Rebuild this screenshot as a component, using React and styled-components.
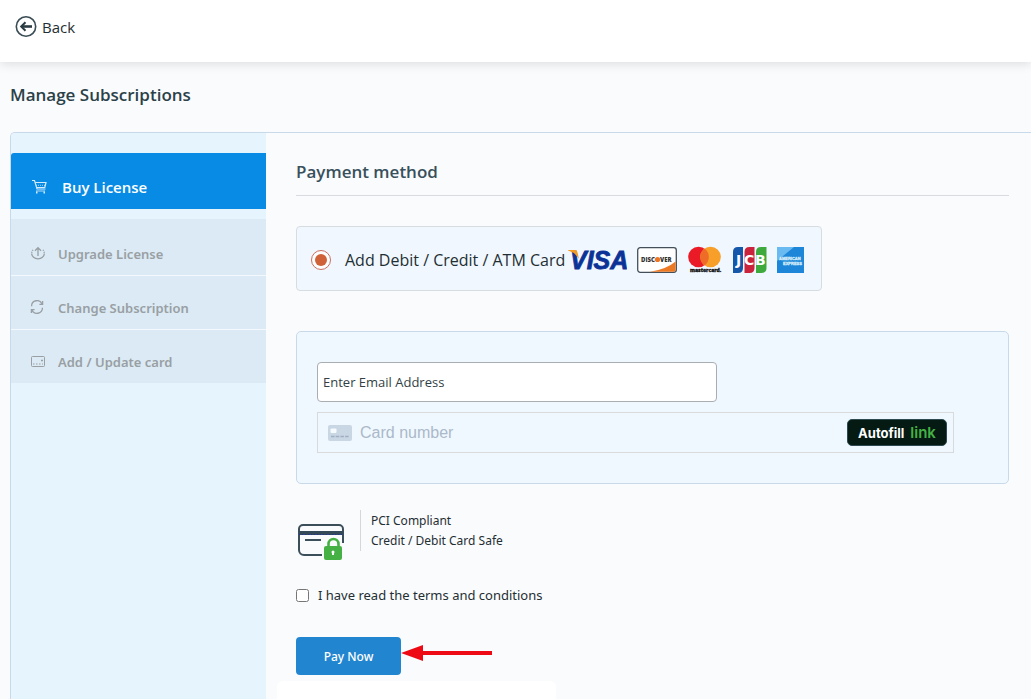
import React, { useState } from "react";
import styled, { createGlobalStyle } from "styled-components";

const colors = {
  page: "#fafbfd",
  text: "#1f2f33",
  heading: "#2b4148",
  border: "#c8d9e9",
  sidebar: "#e6f4fd",
  item: "#dbeaf5",
  active: "#078be4",
  muted: "#999fa3",
  button: "#2185d0",
  green: "#45b144"
};

const headingFont = `"Open Sans", "Noto Sans", sans-serif`;
const bodyFont = `"Noto Sans", "Open Sans", sans-serif`;

const GlobalStyle = createGlobalStyle`
  * {
    box-sizing: border-box;
  }

  body {
    margin: 0;
    background: ${colors.page};
    color: ${colors.text};
    font-family: ${bodyFont};
    font-size: 14px;
  }

  button,
  input {
    font-family: inherit;
  }
`;

/* icons */

const BackIcon = () => (
  <svg width="22" height="22" viewBox="0 0 22 22" fill="none" aria-hidden="true">
    <circle cx="11" cy="10.5" r="9.7" stroke="#3a4c54" strokeWidth="1.6" />
    <path d="M17 10.5H7" stroke="#2b3b42" strokeWidth="2.6" />
    <path d="M10.5 6.3L6.2 10.5l4.3 4.2" stroke="#2b3b42" strokeWidth="2" />
  </svg>
);

const CartIcon = () => (
  <svg width="16" height="16" viewBox="0 0 16 16" fill="none" stroke="#d3ebfb" strokeWidth="1.2" aria-hidden="true">
    <path d="M1 1.5h2.5L6 10h8.5" />
    <path d="M4 3.5H15L13.8 8.5H5.5" />
    <path d="M5 6.3h9" strokeDasharray="1 1" opacity="0.6" />
    <path d="M5 12h9" opacity="0.7" />
    <path d="M5 13.5h1.5M12.5 13.5H14" strokeWidth="2" />
  </svg>
);

const UploadIcon = () => (
  <svg width="16" height="16" viewBox="0 0 16 16" fill="none" stroke="currentColor" strokeWidth="1.3" aria-hidden="true">
    <path d="M8 10V2M5 4.7L8 1.7l3 3" />
    <path d="M3 3.8A6.3 6.3 0 0 0 1.7 7M13 3.8A6.3 6.3 0 0 1 14.3 7" strokeDasharray="1.2 1" />
    <path d="M1.7 7.5a6.3 5.4 0 0 0 12.600 0" />
  </svg>
);

const RefreshIcon = () => (
  <svg width="16" height="16" viewBox="0 0 16 16" fill="none" stroke="currentColor" strokeWidth="1.3" aria-hidden="true">
    <path d="M1.6 6.2A5.400 5.400 0 0 1 12 4M12.400 7.800A5.400 5.400 0 0 1 2 10" />
    <path d="M12.600 1v3.400H9.400M1.400 13V9.600h3.200" />
  </svg>
);

const SmallCardIcon = () => (
  <svg width="16" height="16" viewBox="0 0 16 16" fill="none" stroke="currentColor" aria-hidden="true">
    <rect x="1.500" y="2.500" width="13" height="10" rx="1" />
    <path d="M3 10h1.500M6 10h1.500M9 10h1.500M12 10h1M11 6.500h2M12 5.500v2" />
  </svg>
);

const CardNumberIcon = () => (
  <svg width="24" height="16" viewBox="0 0 24 16" aria-hidden="true">
    <rect width="24" height="16" rx="2" fill="#c9d6e3" />
    <rect x="2.500" y="3.500" width="6" height="4.500" rx="1" fill="#f5fbff" />
    <path d="M3 11.500h18" stroke="#9fb0c2" strokeWidth="1.600" strokeDasharray="3.500 1.200" />
  </svg>
);

const SecureCardIcon = () => (
  <svg width="48" height="38" viewBox="0 0 48 38" fill="none" aria-hidden="true">
    <path d="M25 33H7a5 5 0 0 1-5-5V7a4 4 0 0 1 4-4h36a4 4 0 0 1 4 4v14" stroke="#3b4f5b" strokeWidth="2" />
    <path d="M2 11h44" stroke="#354a58" strokeWidth="4" />
    <path d="M2 12.500h44" stroke="#2431a5" strokeDasharray="1 2" />
    <path d="M8 18h16" stroke="#3b4f5b" strokeWidth="2" />
    <path d="M31.500 26v-4a5 5 0 0 1 10 0v4" stroke={colors.green} strokeWidth="2.600" />
    <rect x="27" y="24" width="18" height="14" rx="2" fill={colors.green} />
    <path d="M36 29v4" stroke="#fff" strokeWidth="2" />
    <circle cx="36" cy="30" r="1.500" fill="#fff" />
  </svg>
);

const VisaLogo = () => (
  <svg width="60" height="26" viewBox="0 0 60 26" role="img" aria-label="Visa">
    <text
      x="3"
      y="22"
      fontFamily="Liberation Sans"
      fontSize="25"
      fontWeight="700"
      fontStyle="italic"
      fill="#0b3296"
      stroke="#0b3296"
      strokeWidth="0.8"
    >
      VISA
    </text>
    <path d="M1 3h7.500q1.600 0 2 2.400L12 12Q8 5.500 1 3.600z" fill="#f29b26" />
  </svg>
);

const DiscoverLogo = () => (
  <svg width="40" height="26" viewBox="0 0 40 26" role="img" aria-label="Discover">
    <rect x="0.700" y="0.700" width="38.600" height="24.600" rx="2.500" fill="#fff" stroke="#43505a" strokeWidth="1.300" />
    <path d="M13 24.700Q29 22.500 38.600 14.500V23q0 1.700-1.700 1.700z" fill="#ec7a25" />
    <g fontFamily="Open Sans" fontSize="6" fontWeight="800" fill="#333">
      <text x="4" y="15">DISC</text>
      <text x="23" y="15">VER</text>
    </g>
    <circle cx="20.500" cy="12.500" r="2.600" fill="#ee7623" />
  </svg>
);

const MastercardLogo = () => (
  <svg width="35" height="28" viewBox="0 0 35 28" role="img" aria-label="Mastercard">
    <circle cx="11.500" cy="11" r="10.300" fill="#ea1b26" />
    <circle cx="23.500" cy="11" r="10.300" fill="#f79f28" />
    <path d="M17.500 2.600a10.300 10.300 0 0 1 0 16.800a10.300 10.300 0 0 1 0-16.800z" fill="#ef6b28" />
    <text x="3" y="26" fontFamily="Open Sans" fontSize="5" fontWeight="800" fill="#111" stroke="#111" strokeWidth="0.300">
      mastercard.
    </text>
  </svg>
);

const JcbLogo = () => (
  <svg width="35" height="28" viewBox="0 0 35 28" role="img" aria-label="JCB">
    <path d="M1 6q0-5 5-5h5v21q0 5-5 5H1z" fill="#1557a8" />
    <path d="M12.500 6q0-5 5-5h5v21q0 5-5 5h-5z" fill="#c9243c" />
    <path d="M24 6q0-5 5-5h5.500v21q0 5-5 5H24z" fill="#3eaa3e" />
    <g fontFamily="DejaVu Sans" fontSize="14" fontWeight="700" fill="#fff">
      <text x="4" y="19">J</text>
      <text x="12" y="19">C</text>
      <text x="23" y="19">B</text>
    </g>
  </svg>
);

const AmexLogo = () => (
  <svg width="27" height="26" viewBox="0 0 27 26" role="img" aria-label="American Express">
    <rect width="27" height="26" fill="#1d86d8" />
    <path d="M0 0h17L0 14z" fill="#69baf0" />
    <g fontFamily="Liberation Sans" fontSize="4" fontWeight="700" fill="#d8edfb" stroke="#d8edfb" strokeWidth="0.300">
      <text x="2" y="13">AMERICAN</text>
      <text x="6" y="18">EXPRESS</text>
    </g>
  </svg>
);

const Arrow = () => (
  <svg width="91" height="32" viewBox="0 0 91 32" fill="#ee0a14" aria-hidden="true">
    <path d="M0 16l22-8v6h69v4H22v6z" />
  </svg>
);

const menu = [
  { label: "Upgrade License", icon: UploadIcon },
  { label: "Change Subscription", icon: RefreshIcon },
  { label: "Add / Update card", icon: SmallCardIcon }
];

const App = () => {
  const [accepted, setAccepted] = useState(false);

  return (
    <PageStyle>
      <GlobalStyle />
      <HeaderStyle>
        <BackLink href="#back">
          <BackIcon />
          Back
        </BackLink>
      </HeaderStyle>
      <Title>Manage Subscriptions</Title>
      <PanelStyle>
        <Sidebar>
          <ActiveLink href="#buy">
            <CartIcon />
            Buy License
          </ActiveLink>
          {menu.map(({ label, icon: Icon }) => (
            <MenuLink href="#menu" key={label}>
              <Icon />
              {label}
            </MenuLink>
          ))}
        </Sidebar>
        <ContentStyle>
          <SectionTitle>Payment method</SectionTitle>
          <MethodLabel>
            <Radio type="radio" name="method" defaultChecked />
            <span>Add Debit / Credit / ATM Card</span>
            <LogoRow>
              <VisaLogo />
              <DiscoverLogo />
              <MastercardLogo />
              <JcbLogo />
              <AmexLogo />
            </LogoRow>
          </MethodLabel>
          <CardForm>
            <EmailInput type="email" placeholder="Enter Email Address" aria-label="Enter Email Address" />
            <CardField>
              <CardNumberIcon />
              <CardInput type="text" placeholder="Card number" aria-label="Card number" />
              <AutofillButton type="button">
                Autofill <LinkMark>link</LinkMark>
              </AutofillButton>
            </CardField>
          </CardForm>
          <SafeRow>
            <SecureCardIcon />
            <SafeText>
              PCI Compliant
              <br />
              Credit / Debit Card Safe
            </SafeText>
          </SafeRow>
          <TermsLabel>
            <Checkbox
              type="checkbox"
              checked={accepted}
              onChange={e => setAccepted(e.target.checked)}
            />
            I have read the terms and conditions
          </TermsLabel>
          <PayRow>
            <PayButton type="button">Pay Now</PayButton>
            <Arrow />
          </PayRow>
          <BottomSheet />
        </ContentStyle>
      </PanelStyle>
    </PageStyle>
  );
};

App.displayName = "App";

const PageStyle = styled.div`
  display: flex;
  flex-direction: column;
  min-height: 100vh;
`;

const HeaderStyle = styled.header`
  display: flex;
  align-items: center;
  padding: 16px 15px 24px;
  background: white;
  box-shadow: 0 2px 10px rgba(0, 0, 0, 0.12);
`;

const BackLink = styled.a`
  display: flex;
  align-items: center;
  gap: 5px;
  color: ${colors.text};
  font-family: ${headingFont};
  font-size: 15px;
  line-height: 22px;
  text-decoration: none;
`;

const Title = styled.h1`
  margin: 20px 10px 25px;
  color: ${colors.heading};
  font-family: ${headingFont};
  font-size: 17px;
  font-weight: 600;
  line-height: 25px;
`;

const PanelStyle = styled.main`
  display: flex;
  flex: 1;
  margin-left: 10px;
  border: solid ${colors.border};
  border-width: 1px 0 0 1px;
  border-radius: 5px 0 0 0;
`;

const Sidebar = styled.nav`
  flex: 0 0 255px;
  padding-top: 20px;
  border-radius: 4px 0 0 0;
  background: ${colors.sidebar};
`;

const MenuLink = styled.a`
  display: flex;
  align-items: center;
  gap: 12px;
  height: 54px;
  padding: 10px 19px 0;
  border-bottom: 1px solid #f3f9fe;
  background: ${colors.item};
  color: ${colors.muted};
  font-size: 13px;
  font-weight: 600;
  text-decoration: none;

  &:nth-child(2) {
    height: 57px;
    padding-top: 14px;
  }

  &:last-child {
    height: 53px;
    border-bottom: 0;
  }
`;

const ActiveLink = styled(MenuLink)`
  gap: 15px;
  height: 56px;
  margin-bottom: 10px;
  padding: 12px 20px 0;
  border-bottom: 0;
  border-radius: 3px 0 0 0;
  background: ${colors.active};
  color: white;
  font-family: ${headingFont};
  font-size: 15px;
`;

const ContentStyle = styled.section`
  display: flex;
  flex: 1;
  flex-direction: column;
  align-items: flex-start;
  min-width: 0;
  padding: 26px 22px 0 30px;
`;

const SectionTitle = styled.h2`
  align-self: stretch;
  margin: 0 0 30px;
  padding-bottom: 10px;
  border-bottom: 1px solid #d8dbdf;
  color: #38505b;
  font-family: ${headingFont};
  font-size: 17px;
  font-weight: 600;
  line-height: 26px;
`;

const MethodLabel = styled.label`
  display: flex;
  align-items: center;
  height: 65px;
  margin-bottom: 40px;
  padding: 2px 17px 0 14px;
  border: 1px solid #d7dce0;
  border-radius: 4px;
  background: #f0f7fe;
  font-family: ${headingFont};
  font-size: 16px;
  line-height: 22px;
  white-space: nowrap;
`;

const Radio = styled.input`
  appearance: none;
  display: grid;
  place-items: center;
  width: 20px;
  height: 20px;
  margin: 0 14px 0 0;
  border: 1px solid #c96f61;
  border-radius: 50%;
  background: white;

  &:checked::before {
    content: "";
    width: 12px;
    height: 12px;
    border-radius: 50%;
    background: #d0623a;
  }
`;

const LogoRow = styled.span`
  display: flex;
  align-items: center;
  gap: 10px;
  margin-left: 2px;
`;

const CardForm = styled.form`
  display: flex;
  flex-direction: column;
  align-self: stretch;
  align-items: flex-start;
  gap: 10px;
  padding: 30px 54px 30px 20px;
  border: 1px solid ${colors.border};
  border-radius: 5px;
  background: #f0f8ff;
`;

const EmailInput = styled.input`
  width: 400px;
  max-width: 100%;
  height: 40px;
  padding: 0 5px;
  border: 1px solid #a9aeb2;
  border-radius: 4px;
  background: white;
  font-family: ${headingFont};
  font-size: 13px;

  &::placeholder {
    color: #333f45;
  }
`;

const CardField = styled.div`
  display: flex;
  align-items: center;
  align-self: stretch;
  gap: 8px;
  height: 41px;
  padding: 0 6px 0 10px;
  border: 1px solid #d8dadb;
`;

const CardInput = styled.input`
  flex: 1;
  min-width: 0;
  padding: 0;
  border: 0;
  background: transparent;
  font-family: "Liberation Sans", sans-serif;
  font-size: 16px;

  &::placeholder {
    color: #abb9c9;
  }
`;

const AutofillButton = styled.button`
  display: flex;
  align-items: center;
  justify-content: center;
  gap: 6px;
  width: 100px;
  height: 27px;
  padding: 0;
  border: 1px solid #2c4a50;
  border-radius: 5px;
  background: #041a12;
  color: white;
  font-family: Inter, sans-serif;
  font-size: 13px;
  font-weight: 700;
`;

const LinkMark = styled.span`
  color: ${colors.green};
  font-size: 15px;
  font-weight: 600;
`;

const SafeRow = styled.div`
  display: flex;
  align-items: flex-end;
  gap: 15px;
  margin: 26px 0 25px 1px;
  height: 50px;
`;

const SafeText = styled.p`
  align-self: flex-start;
  margin: 0;
  padding: 1px 0 0 10px;
  border-left: 1px solid #d5d8db;
  font-size: 12px;
  line-height: 20px;
`;

const TermsLabel = styled.label`
  display: flex;
  align-items: center;
  gap: 9px;
  margin-bottom: 32px;
  font-size: 13px;
  line-height: 20px;
`;

const Checkbox = styled.input`
  width: 13px;
  height: 13px;
  margin: 0;
`;

const PayRow = styled.div`
  display: flex;
  align-items: flex-start;
`;

const PayButton = styled.button`
  width: 105px;
  height: 38px;
  padding: 0;
  border: 0;
  border-radius: 4px;
  background: ${colors.button};
  color: white;
  font-size: 12px;
  font-weight: 500;
`;

const BottomSheet = styled.div`
  flex: 1;
  width: 279px;
  margin: 6px 0 0 -19px;
  border-radius: 6px 6px 0 0;
  background: white;
`;

export default App;
